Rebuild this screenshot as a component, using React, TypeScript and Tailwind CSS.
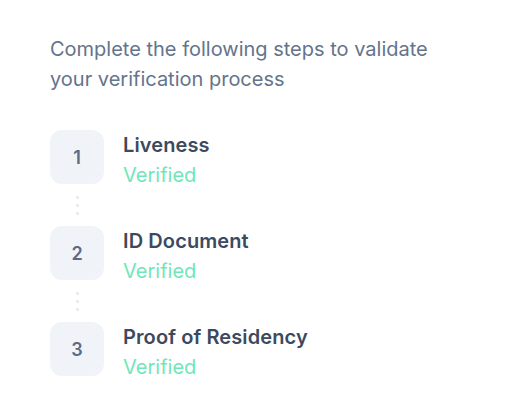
import React from "react";

const steps = [
  { n: 1, title: "Liveness" },
  { n: 2, title: "ID Document" },
  { n: 3, title: "Proof of Residency" },
];

export default function App() {
  return (
    <div
      className="w-[519px] h-[406px] bg-white pl-[50px] pt-[34px]"
      style={{ fontFamily: "Inter, 'Noto Sans', sans-serif" }}
    >
      <p className="text-[20px] leading-[30px] text-[#64748b] w-[405px]">
        Complete the following steps to validate your verification process
      </p>
      <div className="mt-[36px] flex flex-col">
        {steps.map((s, i) => (
          <div key={s.n} className="flex flex-col">
            <div className="flex items-start gap-[19px] h-[54px]">
              <div className="w-[54px] h-[54px] shrink-0 rounded-[12px] bg-[#f0f4f9] flex items-center justify-center text-[18px] font-semibold text-[#5b6b86]">
                {s.n}
              </div>
              <div className="flex flex-col pt-[1px]">
                <span className="text-[20px] leading-[28px] font-semibold text-[#3d4a5e] tracking-[0.1px]">
                  {s.title}
                </span>
                <span className="text-[20px] leading-[28px] mt-[2px] text-[#6ee7b7]">
                  Verified
                </span>
              </div>
            </div>
            {i < steps.length - 1 && (
              <div className="w-[54px] h-[42px] flex flex-col items-center justify-center gap-[5px]">
                <span className="w-[3px] h-[3px] rounded-full bg-[#e2e8f0]" />
                <span className="w-[3px] h-[3px] rounded-full bg-[#e2e8f0]" />
                <span className="w-[3px] h-[3px] rounded-full bg-[#e2e8f0]" />
              </div>
            )}
          </div>
        ))}
      </div>
    </div>
  );
}
